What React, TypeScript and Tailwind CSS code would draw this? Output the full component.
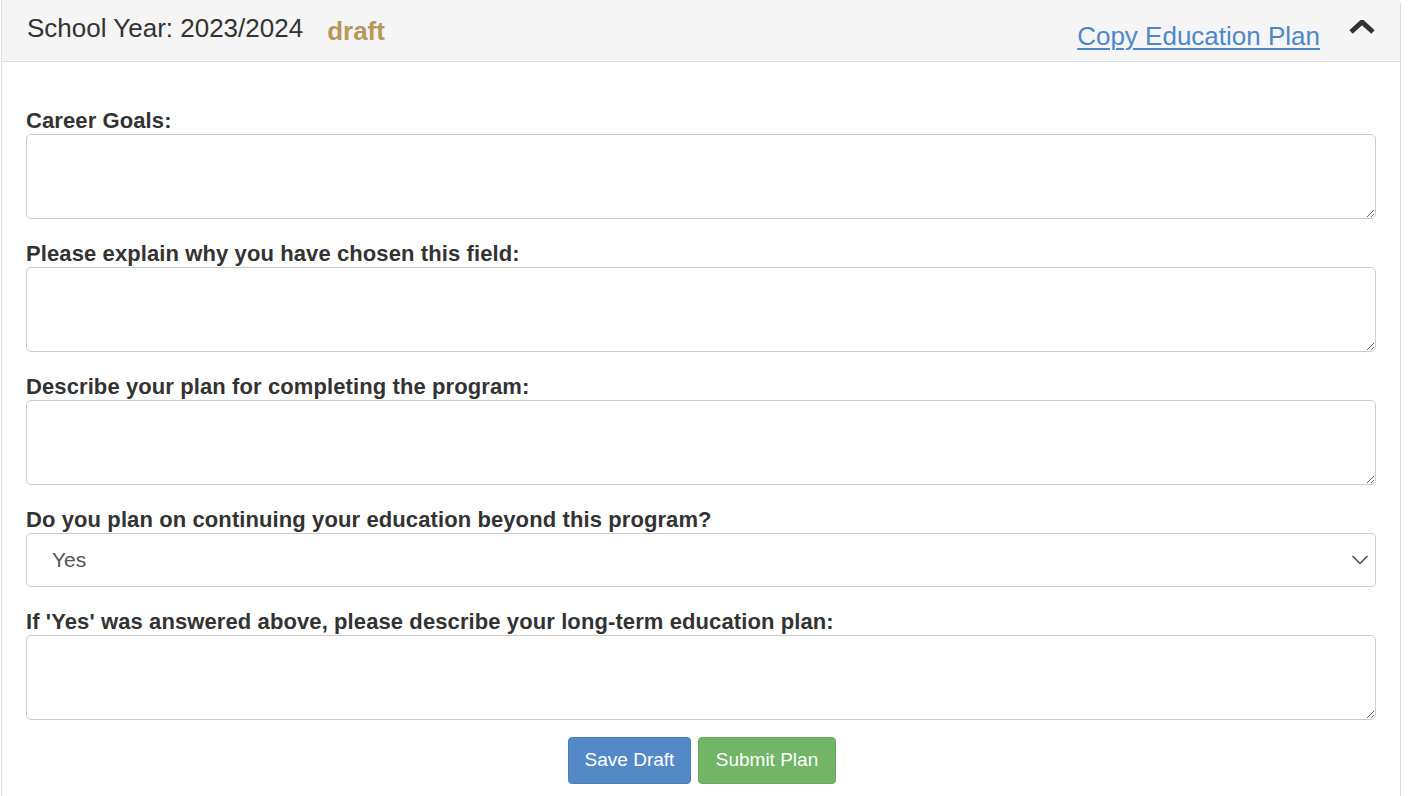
import { ChevronDown } from "lucide-react";

const questions = [
  { label: "Career Goals:", kind: "text" },
  { label: "Please explain why you have chosen this field:", kind: "text" },
  { label: "Describe your plan for completing the program:", kind: "text" },
  { label: "Do you plan on continuing your education beyond this program?", kind: "select" },
  { label: "If 'Yes' was answered above, please describe your long-term education plan:", kind: "text" },
];

function ChevronUp() {
  return (
    <svg width="26" height="16" viewBox="0 0 26 16" className="text-[#333]">
      <path d="M2 12 L13 2 L24 12" fill="none" stroke="currentColor" strokeWidth="5" strokeLinejoin="miter" />
    </svg>
  );
}

export default function App() {
  return (
    <div className="pl-px bg-white min-h-[796px] font-['Liberation_Sans',Arial,sans-serif] text-[#333]">
      <div className="w-[1400px] border-x border-[#ddd] rounded-tr-[5px]">
        {/* panel heading */}
        <div className="flex items-start h-[62px] bg-[#f5f5f5] border-b border-[#ddd] rounded-tr-[5px] pl-[25px] pr-[25px]">
          <div className="pt-[13px] text-[26px] leading-[30px]">School Year: 2023/2024</div>
          <div className="pt-[16px] ml-[24px] text-[26px] leading-[30px] font-bold text-[#b9975b]">draft</div>
          <a
            href="#"
            className="ml-auto pt-[21px] text-[26px] leading-[30px] text-[#4d89c9] underline underline-offset-[3px] decoration-[2px]"
          >
            Copy Education Plan
          </a>
          <div className="ml-[29px] pt-[20px]">
            <ChevronUp />
          </div>
        </div>

        {/* panel body */}
        <div className="px-[24px] pt-[45px] pb-[12px]">
          <form className="flex flex-col gap-[21px]">
            {questions.map((q) => (
              <div key={q.label}>
                <label className="block text-[22px] leading-[27px] font-bold tracking-[0.1px]">{q.label}</label>
                {q.kind === "text" ? (
                  <textarea className="block w-full h-[85px] border border-[#ccc] rounded-[5px] bg-white px-3 py-2 text-[20px] outline-none" />
                ) : (
                  <div className="relative">
                    <select className="block w-full h-[54px] appearance-none border border-[#ccc] rounded-[5px] bg-white pl-[25px] text-[21px] text-[#555] outline-none">
                      <option>Yes</option>
                      <option>No</option>
                    </select>
                    <ChevronDown
                      size={28}
                      strokeWidth={1.5}
                      className="absolute right-[2px] top-[13px] text-[#555] pointer-events-none"
                    />
                  </div>
                )}
              </div>
            ))}
          </form>

          <div className="flex justify-center gap-[7px] mt-[17px] pl-[2px]">
            <button className="h-[47px] w-[123px] rounded-[4px] border border-[#4a7ebb] bg-[#5489c8] text-white text-[19px]">
              Save Draft
            </button>
            <button className="h-[47px] w-[138px] rounded-[4px] border border-[#67aa5d] bg-[#72b567] text-white text-[19px]">
              Submit Plan
            </button>
          </div>
        </div>
      </div>
    </div>
  );
}
